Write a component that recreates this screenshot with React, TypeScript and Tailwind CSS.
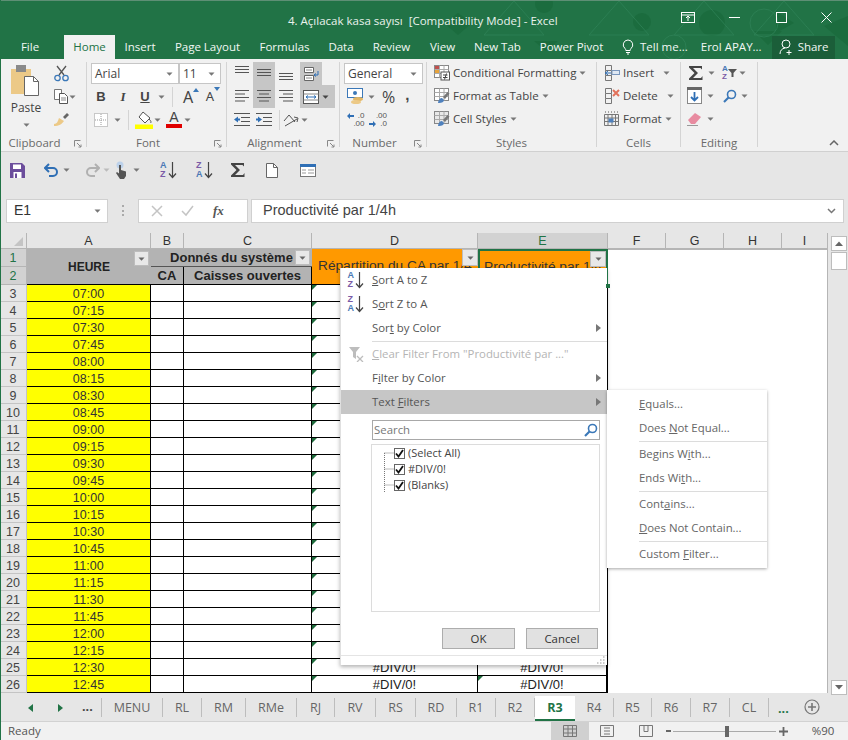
import React from 'react';

const ui = "font-['Open_Sans',sans-serif]";
const arial = "font-['Liberation_Sans',Arial,sans-serif]";

const Caret = ({ c = '#777', cls = '' }: { c?: string; cls?: string }) => (
  <svg width="7" height="4" viewBox="0 0 7 4" className={cls}><path d="M0.5 0.5h6L3.5 3.8z" fill={c} /></svg>
);

const Launcher = () => (
  <svg width="8" height="8" viewBox="0 0 8 8" className="absolute right-[4px] bottom-[-1px]">
    <path d="M.5.5h6M.5.5v6M3 3l4 4M7 4.5V7H4.5" stroke="#888" fill="none" />
  </svg>
);

const Group = ({ w, label, lab = '', children }: { w: string; label: string; lab?: string; children: React.ReactNode }) => (
  <div className={`${w} relative flex flex-col h-[85px] mt-[3px] border-r border-[#d4d4d4] shrink-0`}>
    <div className="flex-1 min-h-0">{children}</div>
    <div className={`h-[16px] mb-[-4px] text-center text-[11.5px] leading-[16px] text-[#6a6a6a] ${lab} ${ui}`}>{label}</div>
  </div>
);

const Combo = ({ w, text }: { w: string; text: string }) => (
  <div className={`${w} h-[21px] bg-white border border-[#c6c6c6] flex items-center justify-between pl-[3px] pr-[5px] text-[12px] text-[#444] ${ui}`}>
    <span>{text}</span><Caret />
  </div>
);

const SortIcon = ({ up = true }: { up?: boolean }) => (
  <span className="relative flex items-center w-[18px] h-[20px] shrink-0">
    <span className={`flex flex-col leading-[9px] text-[9px] font-bold ${arial}`}>
      <span className={up ? 'text-[#4a78b5]' : 'text-[#7a5aa6]'}>{up ? 'A' : 'Z'}</span>
      <span className={up ? 'text-[#7a5aa6]' : 'text-[#4a78b5]'}>{up ? 'Z' : 'A'}</span>
    </span>
    <svg width="9" height="18" viewBox="0 0 9 18" className="ml-[1px]"><path d="M4.5 1v15M1 12.5l3.5 4 3.5-4" stroke="#444" strokeWidth="1.2" fill="none" /></svg>
  </span>
);

const Sigma = ({ s = 18 }: { s?: number }) => (
  <svg width={s} height={s} viewBox="0 0 18 18"><path d="M2 2h13v3.5L13.5 4H6l5 5-5 5h8l1.5-2v4H2v-1.5L7.5 9 2 3.5z" fill="#444" /></svg>
);

const Line = ({ w, y }: { w: number; y: number }) => <rect x={(16 - w) / 2} y={y} width={w} height="1" fill="#555" />;
const Align = ({ kind }: { kind: 'top' | 'mid' | 'bot' | 'l' | 'c' | 'r' }) => {
  if (kind === 'top' || kind === 'mid' || kind === 'bot') {
    const o = kind === 'top' ? 0 : kind === 'mid' ? 3 : 7;
    return <svg width="16" height="16" viewBox="0 0 16 16">{[1, 4, 7].map(y => <Line key={y} w={14} y={y + o} />)}</svg>;
  }
  const ws = [14, 10, 14, 10];
  return (
    <svg width="16" height="16" viewBox="0 0 16 16">
      {ws.map((w, i) => <rect key={i} x={kind === 'l' ? 1 : kind === 'r' ? 15 - w : (16 - w) / 2} y={2 + i * 3.5} width={w} height="1" fill="#555" />)}
    </svg>
  );
};

const Indent = ({ out }: { out?: boolean }) => (
  <svg width="18" height="14" viewBox="0 0 18 14">
    {[1, 5, 9, 13].map((y, i) => <rect key={y} x={i === 0 || i === 3 ? 1 : 8} y={y - 1} width={i === 0 || i === 3 ? 16 : 9} height="1" fill="#555" />)}
    <path d={out ? 'M1 6.5l4-3v2h2v2H5v2z' : 'M7 6.5l-4-3v2H1v2h2v2z'} fill="#2f6fb5" />
  </svg>
);

const Row = ({ cls = '', children }: { cls?: string; children: React.ReactNode }) => (
  <div className={`h-[23px] flex items-center ${cls}`}>{children}</div>
);
const Slot = ({ w = 'w-[22px]', children }: { w?: string; children?: React.ReactNode }) => (
  <div className={`${w} h-[22px] flex items-center justify-center shrink-0`}>{children}</div>
);
const VSep = ({ m }: { m: string }) => <div className={`w-px h-[20px] bg-[#d4d4d4] ${m}`} />;

const StyleIcon = ({ kind }: { kind: 'cf' | 'table' | 'cell' }) => (
  <svg width="16" height="16" viewBox="0 0 16 16">
    <rect x=".5" y=".5" width="14" height="12" fill={kind === 'cell' ? '#e8e8e8' : '#fff'} stroke="#888" />
    <path d="M.5 4.5h14M.5 8.5h14M5.5.5v12M10 .5v12" stroke="#aaa" fill="none" />
    {kind === 'cf' ? (
      <>
        <rect x="1" y="1" width="4" height="3" fill="#c0504d" />
        <rect x="1" y="5" width="4" height="3" fill="#e6a33c" />
        <rect x="7" y="7" width="8.5" height="8" fill="#fff" stroke="#555" />
        <path d="M9 10h4.5M9 12.5h4.5M12.5 8.5l-2 6" stroke="#444" fill="none" />
      </>
    ) : (
      <>
        <path d="M9 9l4.5-5 2 1.5L11 11z" fill="#777" />
        <path d="M4 15c0-3 2-5 4-5l2 2c0 2-3 3.5-6 3z" fill="#4f81bd" />
      </>
    )}
  </svg>
);

const CellIcon = ({ kind }: { kind: 'ins' | 'del' | 'fmt' }) => (
  <svg width="16" height="16" viewBox="0 0 16 16">
    {kind === 'fmt' ? (
      <>
        <path d="M.5 3.5h14v11H.5zM.5 7h14M.5 10.500h14M4 3.500v11M8 3.500v11M11.500 3.500v11" stroke="#777" fill="none" />
        <rect x="4.500" y="7.500" width="5" height="4" fill="#4f81bd" />
        <path d="M1 1h13" stroke="#555" strokeDasharray="1 2" />
      </>
    ) : (
      <>
        <path d="M1.500 .5h6v5h-6zM1.500 10.500h6v5h-6zM1.500 5.500v5M7.500 5.500v5" stroke="#777" fill="none" />
        {kind === 'ins' ? (
          <>
            <rect x="8" y="5.500" width="7.500" height="4" fill="#dfe8f3" stroke="#7a97bd" />
            <path d="M1 8h6M4 6l-2.500 2L4 10" stroke="#2f6fb5" fill="none" />
          </>
        ) : (
          <path d="M9 2l6 6M15 2L9 8" stroke="#e2725b" strokeWidth="2" />
        )}
      </>
    )}
  </svg>
);

const Ribbon = () => (
  <div className="flex h-[93px] shrink-0 bg-[#f1f1f1] border-b border-[#d0d0d0]">
    <Group w="w-[87px]" label="Clipboard" lab="pr-[17px]">
      <div className="flex">
        <div className="w-[50px] flex flex-col items-center pl-[2px]">
          <svg width="30" height="32" viewBox="0 0 30 32" className="mt-[3px]">
            <rect x="0" y="4" width="20" height="25" fill="#ecc987" />
            <rect x="5" y="0" width="10" height="7" fill="#8a8a8a" />
            <path d="M13.500 11.500h9l5 5v14h-14z" fill="#fff" stroke="#666" />
            <path d="M22.500 11.500v5h5" stroke="#666" fill="none" />
          </svg>
          <span className={`text-[12px] leading-[16px] mt-[3px] text-[#444] ${ui}`}>Paste</span>
          <Caret cls="mt-[7px]" />
        </div>
        <div className="flex flex-col">
          <Row>
            <Slot>
              <svg width="15" height="17" viewBox="0 0 15 17"><path d="M3 1l7 9M12 1l-7 9" stroke="#555" strokeWidth="1.300" /><circle cx="3.500" cy="13" r="2.700" fill="none" stroke="#3b78b8" strokeWidth="1.300" /><circle cx="11.500" cy="13" r="2.700" fill="none" stroke="#3b78b8" strokeWidth="1.300" /></svg>
            </Slot>
          </Row>
          <Row>
            <Slot>
              <svg width="15" height="15" viewBox="0 0 15 15"><path d="M.5.500h7v10h-7z" fill="#fff" stroke="#777" /><path d="M5.500 4.500h5l3 3v7h-8z" fill="#fff" stroke="#555" /><path d="M7 9h5M7 11h5" stroke="#888" /></svg>
            </Slot>
            <Caret cls="ml-[-3px]" />
          </Row>
          <Row>
            <Slot>
              <svg width="17" height="15" viewBox="0 0 17 15"><path d="M10 5l4-4 2 2-4 4z" fill="#666" /><path d="M1 12c3 0 4-3 5-6l5 3c-2 3-5 5-10 5z" fill="#ecc987" /></svg>
            </Slot>
          </Row>
        </div>
      </div>
      <Launcher />
    </Group>
    <Group w="w-[140px]" label="Font" lab="pr-[17px]">
      <Row cls="pl-[4px]">
        <Combo w="w-[88px]" text="Arial" />
        <Combo w="w-[42px]" text="11" />
      </Row>
      <Row cls="pl-[3px] text-[13px] text-[#444]">
        <Slot><b className={arial}>B</b></Slot>
        <Slot><i className="font-['Liberation_Serif',serif] font-bold">I</i></Slot>
        <Slot><u className={`${arial} font-bold`}>U</u></Slot>
        <Caret cls="ml-[2px]" />
        <VSep m="ml-[7px] mr-[4px]" />
        <Slot><span className="relative text-[16px] leading-none">A<svg width="6" height="4" viewBox="0 0 6 4" className="absolute right-[-6px] top-[-1px]"><path d="M0 4l3-4 3 4z" fill="#3b78b8" /></svg></span></Slot>
        <Slot><span className="relative text-[13px] leading-none">A<svg width="6" height="4" viewBox="0 0 6 4" className="absolute right-[-6px] top-[-3px]"><path d="M0 0l3 4 3-4z" fill="#3b78b8" /></svg></span></Slot>
      </Row>
      <Row cls="pl-[3px]">
        <Slot>
          <svg width="14" height="14" viewBox="0 0 14 14"><rect x=".5" y=".5" width="13" height="13" fill="#fff" stroke="#999" strokeDasharray="1 1" /><path d="M7 1v12M1 7h12" stroke="#999" strokeDasharray="1 1" /></svg>
        </Slot>
        <Caret cls="ml-[2px]" />
        <VSep m="ml-[7px] mr-[4px]" />
        <Slot>
          <svg width="18" height="18" viewBox="0 0 18 18"><path d="M8 1l7 6-5 5-6-6z" fill="#fff" stroke="#555" /><path d="M14 8c2 2 2.500 3 1.500 4" stroke="#555" fill="none" /><rect x="0" y="13.500" width="18" height="4.500" fill="#ffff00" /></svg>
        </Slot>
        <Caret cls="ml-[-1px]" />
        <Slot w="w-[26px]">
          <span className="relative flex flex-col items-center">
            <span className={`text-[14px] leading-[13px] text-[#444] ${arial}`}>A</span>
            <span className="w-[16px] h-[4px] bg-[#e00000]" />
          </span>
        </Slot>
        <Caret cls="ml-[-3px]" />
      </Row>
      <Launcher />
    </Group>
    <Group w="w-[113px]" label="Alignment" lab="pr-[17px]">
      <div className="flex pl-[4px]">
        <div className="flex flex-col">
          <div className="flex">
            <div className="flex flex-col">
              <Slot><Align kind="top" /></Slot>
              <Slot w="w-[22px] h-[24px]"><Align kind="l" /></Slot>
            </div>
            <div className="flex flex-col">
              <Slot w="w-[22px] bg-[#c6c6c6]"><Align kind="mid" /></Slot>
              <Slot w="w-[22px] bg-[#c6c6c6] h-[24px]"><Align kind="c" /></Slot>
            </div>
            <div className="flex flex-col">
              <Slot><Align kind="bot" /></Slot>
              <Slot w="w-[22px] h-[24px]"><Align kind="r" /></Slot>
            </div>
          </div>
          <div className="flex mt-[1px]">
            <Slot><Indent out /></Slot>
            <Slot><Indent /></Slot>
            <VSep m="ml-[4px] mr-[1px] mt-[1px]" />
            <Slot w="w-[20px]">
              <svg width="18" height="16" viewBox="0 0 18 16"><path d="M2 9l5-6 6 7" stroke="#555" fill="none" /><path d="M3 14l12-7M12 5l4 1-1 4" stroke="#555" fill="none" /></svg>
            </Slot>
            <Caret cls="mt-[9px]" />
          </div>
        </div>
        <div className="flex flex-col ml-[3px] absolute left-[70px] top-0">
          <Slot w="w-[22px] bg-[#c6c6c6] h-[23px]">
            <svg width="16" height="16" viewBox="0 0 16 16"><path d="M1.500 1.500h9v5h-9zM1.500 9.500h9v5h-9z" fill="#fff" stroke="#666" /><path d="M3 4h6M3 12h6" stroke="#888" /><path d="M15 5v4h-4M13 7.500L11 9l2 1.500" stroke="#2f6fb5" fill="none" /></svg>
          </Slot>
          <div className="w-[35px] h-[23px] bg-[#c6c6c6] flex items-center">
            <Slot>
              <svg width="16" height="16" viewBox="0 0 16 16"><rect x=".5" y="1.500" width="15" height="13" fill="#fff" stroke="#555" /><path d="M.5 5h15M.5 11h15" stroke="#888" /><path d="M3 8h10M5 6.500L3 8l2 1.500M11 6.500L13 8l-2 1.500" stroke="#2f6fb5" fill="none" /></svg>
            </Slot>
            <Caret c="#444" />
          </div>
        </div>
      </div>
      <Launcher />
    </Group>
    <Group w="w-[87px]" label="Number" lab="pr-[17px]">
      <Row cls="pl-[4px]"><Combo w="w-[79px]" text="General" /></Row>
      <Row cls="pl-[5px]">
        <Slot>
          <svg width="18" height="17" viewBox="0 0 18 17"><rect x=".5" y=".5" width="15" height="9" fill="#fff" stroke="#3b78b8" /><circle cx="8" cy="5" r="2" fill="#3b78b8" /><ellipse cx="11" cy="11" rx="5" ry="2" fill="#e3b765" /><ellipse cx="9" cy="14" rx="5" ry="2" fill="#ecc987" /></svg>
        </Slot>
        <Caret cls="ml-[1px]" />
        <span className={`ml-[7px] text-[16px] leading-none text-[#444] ${ui}`}>%</span>
        <span className={`ml-[10px] mt-[-5px] text-[15px] font-bold leading-none text-[#444] ${arial}`}>,</span>
      </Row>
      <Row cls="pl-[5px]">
        <Slot w="w-[21px]">
          <span className={`relative w-[18px] h-[16px] text-[8px] leading-[8px] text-[#555] ${arial}`}>
            <span className="absolute right-0 top-0">.0</span><span className="absolute right-0 bottom-0">.00</span>
            <svg width="7" height="6" viewBox="0 0 7 6" className="absolute left-0 top-[1px]"><path d="M0 3l3-3v2h4v2H3v2z" fill="#2f6fb5" /></svg>
          </span>
        </Slot>
        <Slot w="w-[24px]">
          <span className={`relative w-[18px] h-[16px] text-[8px] leading-[8px] text-[#555] ${arial}`}>
            <span className="absolute right-0 top-0">.00</span><span className="absolute right-0 bottom-0">.0</span>
            <svg width="7" height="6" viewBox="0 0 7 6" className="absolute left-0 bottom-[1px]"><path d="M7 3L4 0v2H0v2h4v2z" fill="#2f6fb5" /></svg>
          </span>
        </Slot>
      </Row>
      <Launcher />
    </Group>
    <Group w="w-[170px]" label="Styles">
      <div className="mt-[-1px]">
        {([['cf', 'Conditional Formatting'], ['table', 'Format as Table'], ['cell', 'Cell Styles']] as const).map(([k, t]) => (
          <Row key={k} cls="pl-[7px]">
            <StyleIcon kind={k} />
            <span className={`ml-[3px] text-[11.5px] text-[#444] whitespace-nowrap ${ui}`}>{t}</span>
            <Caret cls="ml-[3px]" />
          </Row>
        ))}
      </div>
    </Group>
    <Group w="w-[84px]" label="Cells">
      <div className="mt-[-1px]">
        {([['ins', 'Insert', 'ml-[9px]'], ['del', 'Delete', 'ml-[9px]'], ['fmt', 'Format', 'ml-[3px]']] as const).map(([k, t, m]) => (
          <Row key={k} cls="pl-[7px]">
            <CellIcon kind={k} />
            <span className={`ml-[3px] text-[11.5px] text-[#444] ${ui}`}>{t}</span>
            <Caret cls={m} />
          </Row>
        ))}
      </div>
    </Group>
    <Group w="w-[77px]" label="Editing">
      <div className="mt-[-1px]">
        <Row cls="pl-[6px]">
          <Slot w="w-[18px]"><Sigma /></Slot>
          <Caret cls="ml-[3px]" />
          <span className="ml-[7px] flex items-center">
            <span className={`flex flex-col text-[8px] leading-[8px] font-bold ${arial}`}><span className="text-[#4a78b5]">A</span><span className="text-[#7a5aa6]">Z</span></span>
            <svg width="9" height="8" viewBox="0 0 9 8"><path d="M0 0h9L5.500 4v4h-2V4z" fill="#555" /></svg>
          </span>
          <Caret cls="ml-[2px]" />
        </Row>
        <Row cls="pl-[6px]">
          <svg width="15" height="17" viewBox="0 0 15 17"><rect x=".5" y=".5" width="14" height="16" fill="#fff" stroke="#888" /><rect x="0" y="0" width="15" height="3" fill="#666" /><path d="M7.500 5v8M4 10l3.500 3.500L11 10" stroke="#2f6fb5" strokeWidth="1.800" fill="none" /></svg>
          <Caret cls="ml-[5px]" />
          <svg width="14" height="14" viewBox="0 0 14 14" className="ml-[9px]"><circle cx="8.500" cy="5.500" r="4" fill="none" stroke="#3b78b8" strokeWidth="1.600" /><path d="M5.500 8.500L1 13" stroke="#3b78b8" strokeWidth="2.200" /></svg>
          <Caret cls="ml-[4px]" />
        </Row>
        <Row cls="pl-[6px]">
          <svg width="15" height="14" viewBox="0 0 15 14"><path d="M1 8l7-7 6 4-6 7H4z" fill="#e88ba0" /><path d="M0 13.500h11" stroke="#999" /></svg>
          <Caret cls="ml-[5px]" />
        </Row>
      </div>
    </Group>
    <div className="flex-1 relative">
      <svg width="10" height="6" viewBox="0 0 10 6" className="absolute right-[9px] bottom-[5px]"><path d="M1 5l4-4 4 4" stroke="#666" strokeWidth="1.500" fill="none" /></svg>
    </div>
  </div>
);

const TitleBar = () => (
  <div className="relative h-[59px] shrink-0 bg-[#217346] border-t border-[#5e8f75] overflow-hidden">
    <svg width="424" height="59" viewBox="0 0 424 59" className="absolute right-0 top-0">
      <g fill="#1a6a3c" opacity=".75">
        <circle cx="218" cy="21" r="9" /><circle cx="288" cy="22" r="13" /><circle cx="120" cy="3" r="9" />
        <path d="M20 22l14-10 14 10-14 12zM330 30l14 14 14-14zM110 40l12 10 12-10z" />
        <path d="M352 10l18 12-18 10zM400 25l24 20v-30z" />
      </g>
      <g fill="none" stroke="#2f8257" opacity=".8">
        <path d="M165 34l30-34 30 34zM250 34l30-34 30 34zM330 34l30-34 30 34zM60 34l30-34 30 34z" />
        <circle cx="340" cy="22" r="14" /><circle cx="250" cy="46" r="12" />
      </g>
    </svg>
    <div className={`relative h-[34px] flex items-center text-[11.5px] text-[#eaf2ed] ${ui}`}>
      <span className="ml-[288px] mt-[5px] whitespace-pre">4. Açılacak kasa sayısı  [Compatibility Mode] - Excel</span>
      <div className="ml-auto flex items-center h-full text-white pb-[2px]">
        <div className="w-[46px] flex justify-center">
          <svg width="14" height="11" viewBox="0 0 14 11"><rect x=".5" y=".5" width="13" height="10" fill="none" stroke="#fff" /><path d="M.5 3h13M7 9V4.500M5 6l2-2 2 2" stroke="#fff" fill="none" /></svg>
        </div>
        <div className="w-[47px] flex justify-center"><span className="w-[11px] h-px bg-white" /></div>
        <div className="w-[46px] flex justify-center"><span className="w-[11px] h-[11px] border border-white" /></div>
        <div className="w-[44px] flex justify-center">
          <svg width="11" height="11" viewBox="0 0 11 11"><path d="M.5.500l10 10M10.500.500l-10 10" stroke="#fff" /></svg>
        </div>
      </div>
    </div>
    <div className={`relative h-[24px] flex items-center text-[11.5px] text-[#f2f7f4] ${ui}`}>
      <span className="w-[60px] text-center">File</span>
      <span className="w-[4px]" />
      <span className="w-[51px] h-full bg-[#f1f1f1] text-[#217346] text-center leading-[24px]">Home</span>
      {[['w-[50px]', 'Insert'], ['w-[85px]', 'Page Layout'], ['w-[69px]', 'Formulas'], ['w-[44px]', 'Data'], ['w-[57px]', 'Review'], ['w-[45px]', 'View'], ['w-[65px]', 'New Tab'], ['w-[83px]', 'Power Pivot']].map(([w, t]) => (
        <span key={t} className={`${w} text-center whitespace-nowrap`}>{t}</span>
      ))}
      <svg width="12" height="16" viewBox="0 0 12 16" className="ml-[9px]"><path d="M6 1a4.800 4.800 0 0 0-3 8.500c.6.600.8 1.200.8 2h4.400c0-.8.2-1.400.8-2A4.800 4.800 0 0 0 6 1zM4 13.500h4M5 15h2" fill="none" stroke="#fff" /></svg>
      <span className="ml-[6px] whitespace-nowrap">Tell me...</span>
      <span className="ml-[13px] whitespace-nowrap">Erol APAY...</span>
      <div className="ml-[10px] w-[63px] h-[23px] bg-[#1b5e39] flex items-center pl-[7px]">
        <svg width="15" height="16" viewBox="0 0 15 16"><circle cx="7" cy="5" r="4" fill="none" stroke="#fff" /><path d="M1 15c0-3.500 2-5.500 5-6M10 11v5M7.500 13.500h5" fill="none" stroke="#fff" /></svg>
        <span className="ml-[4px]">Share</span>
      </div>
    </div>
  </div>
);

const Qat = () => (
  <div className="h-[38px] shrink-0 bg-[#e6e6e6] flex items-center pl-[10px] pb-[2px]">
    <svg width="15" height="15" viewBox="0 0 15 15"><path d="M0 0h12l3 3v12H0z" fill="#6c4e9c" /><rect x="3" y="1.500" width="8" height="4.500" fill="#fff" /><rect x="3.500" y="9" width="8" height="6" fill="#fff" /><rect x="5" y="10.500" width="2" height="4.500" fill="#6c4e9c" /></svg>
    <svg width="16" height="14" viewBox="0 0 16 14" className="ml-[19px]"><path d="M5 1L1 5l4 4M1 5h8a4 4 0 0 1 0 8H5" stroke="#2f6fb5" strokeWidth="2" fill="none" /></svg>
    <Caret cls="ml-[3px]" />
    <svg width="16" height="14" viewBox="0 0 16 14" className="ml-[14px]"><path d="M11 1l4 4-4 4M15 5H7a4 4 0 0 0 0 8h4" stroke="#b0b0b0" strokeWidth="2" fill="none" /></svg>
    <Caret c="#bbb" cls="ml-[3px]" />
    <svg width="14" height="18" viewBox="0 0 14 18" className="ml-[4px]"><circle cx="6" cy="4" r="3.500" fill="#bcd1ea" /><path d="M5 4h2v5l5 1.500V15l-2 3H6L2 12l1-1 2 1.500z" fill="#555" /></svg>
    <Caret cls="ml-[5px]" />
    <span className="ml-[20px]"><SortIcon /></span>
    <span className="ml-[18px]"><SortIcon up={false} /></span>
    <span className="ml-[15px]"><Sigma /></span>
    <svg width="12" height="15" viewBox="0 0 12 15" className="ml-[19px]"><path d="M.5.500h7l4 4v10H.5z" fill="#fff" stroke="#666" /><path d="M7.500.500v4h4" fill="none" stroke="#666" /></svg>
    <svg width="16" height="13" viewBox="0 0 16 13" className="ml-[22px]"><rect x=".5" y=".5" width="15" height="12" fill="#fff" stroke="#777" /><rect x="0" y="0" width="16" height="3" fill="#2f6fb5" /><path d="M2 6h4M2 9h4M8 6h6M8 9h6" stroke="#999" /></svg>
  </div>
);

const FormulaBar = () => (
  <div className="h-[43px] shrink-0 bg-[#e6e6e6] flex items-center pl-[6px] pb-[2px]">
    <div className={`w-[102px] h-[24px] bg-white border border-[#d0d0d0] flex items-center justify-between pl-[7px] pr-[6px] text-[14px] text-[#333] ${arial}`}>
      <span>E1</span><Caret />
    </div>
    <div className="ml-[14px] w-[2px] h-[11px] border-l-2 border-dotted border-[#aaa]" />
    <div className="ml-[14px] w-[110px] h-[24px] bg-white border border-[#d0d0d0] flex items-center text-[#bbb]">
      <svg width="12" height="12" viewBox="0 0 12 12" className="ml-[12px]"><path d="M1 1l10 10M11 1L1 11" stroke="#c4c4c4" strokeWidth="1.500" /></svg>
      <svg width="13" height="12" viewBox="0 0 13 12" className="ml-[18px]"><path d="M1 6l4 4 7-9" stroke="#c4c4c4" strokeWidth="1.500" fill="none" /></svg>
      <i className="ml-[19px] font-['Liberation_Serif',serif] font-bold text-[13px] text-[#555]">fx</i>
    </div>
    <div className={`ml-[3px] w-[593px] h-[24px] bg-white border border-[#d0d0d0] flex items-center justify-between pl-[11px] pr-[7px] text-[14.5px] text-[#444] ${arial}`}>
      <span>Productivité par 1/4h</span>
      <svg width="9" height="6" viewBox="0 0 9 6"><path d="M1 1l3.500 3.500L8 1" stroke="#777" strokeWidth="1.500" fill="none" /></svg>
    </div>
  </div>
);

const FilterBtn = ({ cls = '' }: { cls?: string }) => (
  <div className={`absolute w-[15px] h-[15px] bg-[#e8e8e8] border border-[#bdbdbd] flex items-center justify-center ${cls}`}>
    <Caret c="#666" />
  </div>
);

const times = Array.from({ length: 24 }, (_, i) => {
  const m = 7 * 60 + i * 15;
  return `${String(Math.floor(m / 60)).padStart(2, '0')}:${String(m % 60).padStart(2, '0')}`;
});

const Tri = () => <span className="absolute left-0 top-0 w-0 h-0 border-t-[5px] border-r-[5px] border-t-[#1e6b3c] border-r-transparent" />;

const Sheet = () => (
  <div className="flex-1 flex min-h-0 bg-[#e6e6e6]">
    <div className={`grid grid-cols-[27px_124px_33px_128px_166px_130px_58px_58px_58px_46px] grid-rows-[16px_18px_18px_repeat(24,17px)] w-[828px] ${arial} text-[12px]`}>
      <div className="border-r border-b border-[#b5b5b5] relative">
        <svg width="9" height="9" viewBox="0 0 9 9" className="absolute right-[3px] bottom-[2px]"><path d="M9 0v9H0z" fill="#c4c4c4" /></svg>
      </div>
      {['A', 'B', 'C', 'D', 'E', 'F', 'G', 'H', 'I'].map(c => (
        <div key={c} className={`text-center leading-[17px] border-r border-b border-[#b5b5b5] text-[12.5px] ${c === 'E' ? 'bg-[#d2d2d2] text-[#217346]' : 'text-[#333]'}`}>{c}</div>
      ))}
      <div className="col-start-1 row-start-2 bg-[#d2d2d2] text-[#217346] text-center leading-[19px] border-r border-b border-[#b5b5b5] text-[12.5px]">1</div>
      <div className="col-start-1 row-start-3 bg-[#d2d2d2] text-[#217346] text-center leading-[19px] border-r border-b border-[#b5b5b5] text-[12.5px]">2</div>
      <div className="col-start-2 row-start-2 row-span-2 relative bg-[#b3b3b3] flex items-center justify-center font-bold text-[#222] border-b border-black">
        HEURE<FilterBtn cls="right-[2px] top-[2px]" />
      </div>
      <div className="col-start-3 col-span-2 row-start-2 relative bg-[#b3b3b3] flex items-center justify-center font-bold text-[13px] text-[#222] border-b border-[#555]">
        Donnés du système<FilterBtn cls="right-[2px] top-[1px]" />
      </div>
      <div className="col-start-3 row-start-3 bg-[#b3b3b3] flex items-center justify-center font-bold text-[13px] text-[#222] border-r border-b border-black">CA</div>
      <div className="col-start-4 row-start-3 bg-[#b3b3b3] flex items-center justify-center font-bold text-[13px] text-[#222] border-r border-b border-black">Caisses ouvertes</div>
      <div className="col-start-5 row-start-2 row-span-2 relative bg-[#ff9900] flex items-center pl-[6px] text-[13.7px] text-[#333] overflow-hidden whitespace-nowrap border-b border-black">
        Répartition du CA par 1/4
        <FilterBtn cls="right-0 top-0 w-[16px] h-[17px]" />
      </div>
      <div className="col-start-6 row-start-2 row-span-2 relative bg-[#ff9900] flex items-center pl-[4px] text-[13.7px] text-[#333] overflow-hidden whitespace-nowrap border-2 border-[#217346]">
        Productivité par 1/4
        <FilterBtn cls="right-0 top-0 w-[16px] h-[16px]" />
      </div>
      <div className="col-start-7 col-span-4 row-start-2 row-span-26 bg-white border-t border-r border-[#b5b5b5]" />
      {times.map((t, i) => (
        <React.Fragment key={t}>
          <div className="col-start-1 bg-[#e6e6e6] text-center text-[12.5px] leading-[18px] text-[#444] border-r border-b border-[#c4c4c4]">{i + 3}</div>
          <div className="col-start-2 bg-[#ffff00] text-center text-[#333] text-[12.5px] leading-[18px] border-b border-r border-black">{t}</div>
          <div className="col-start-3 bg-white border-b border-r border-black" />
          <div className="col-start-4 bg-white border-b border-r border-black" />
          <div className="col-start-5 relative bg-white text-center text-[13px] leading-[18px] text-[#222] border-b border-r border-black"><Tri />{i >= 22 ? '#DIV/0!' : ''}</div>
          <div className="col-start-6 relative bg-white text-center text-[13px] leading-[18px] text-[#222] border-b border-r-2 border-black"><Tri />{i >= 22 ? '#DIV/0!' : ''}</div>
        </React.Fragment>
      ))}
    </div>
    <div className="flex-1 flex flex-col items-center pt-[3px] pl-[3px] pr-[1px]">
      <div className="w-[16px] h-[15px] bg-white border border-[#bdbdbd] flex items-center justify-center">
        <svg width="8" height="5" viewBox="0 0 8 5"><path d="M0 5l4-4.500L8 5z" fill="#666" /></svg>
      </div>
      <div className="w-[16px] h-[18px] bg-white border border-[#bdbdbd] mt-[1px]" />
      <div className="w-[16px] h-[15px] bg-white border border-[#bdbdbd] mt-auto mb-[1px] flex items-center justify-center">
        <svg width="8" height="5" viewBox="0 0 8 5"><path d="M0 0l4 4.500L8 0z" fill="#666" /></svg>
      </div>
    </div>
  </div>
);

const MenuItem = ({ icon, children, arrow, dim, hi }: { icon?: React.ReactNode; children: React.ReactNode; arrow?: boolean; dim?: boolean; hi?: boolean }) => (
  <div className={`h-[24px] flex items-center shrink-0 ${hi ? 'bg-[#c6c6c6]' : ''}`}>
    <div className="w-[31px] flex justify-center">{icon}</div>
    <span className={`text-[11.4px] whitespace-nowrap ${dim ? 'text-[#b4b4b4]' : 'text-[#555]'}`}>{children}</span>
    {arrow && <svg width="5" height="8" viewBox="0 0 5 8" className="ml-auto mr-[6px]"><path d="M0 0l5 4-5 4z" fill="#777" /></svg>}
  </div>
);
const Sep = ({ cls = 'ml-[31px]' }: { cls?: string }) => <div className={`h-[2px] shrink-0 border-b border-[#dcdcdc] ${cls}`} />;

const Popup = () => (
  <div className={`absolute left-[340px] top-[268px] w-[267px] h-[397px] bg-white shadow-[0_2px_4px_rgba(0,0,0,0.3)] border-l border-[#e0e0e0] flex flex-col z-10 ${ui}`}>
    <MenuItem icon={<SortIcon />}><u>S</u>ort A to Z</MenuItem>
    <MenuItem icon={<SortIcon up={false} />}>S<u>o</u>rt Z to A</MenuItem>
    <MenuItem arrow>Sor<u>t</u> by Color</MenuItem>
    <Sep />
    <MenuItem dim icon={
      <svg width="16" height="15" viewBox="0 0 16 15"><path d="M0 0h11L7 5v7l-3-2V5z" fill="#bdbdbd" /><path d="M8 9l6 6M14 9l-6 6" stroke="#bdbdbd" strokeWidth="1.300" /></svg>
    }><u>C</u>lear Filter From "Productivité par ..."</MenuItem>
    <MenuItem arrow>F<u>i</u>lter by Color</MenuItem>
    <MenuItem arrow hi>Text <u>F</u>ilters</MenuItem>
    <div className="ml-[31px] mr-[7px] mt-[6px] h-[20px] border border-[#a8a8a8] flex items-center justify-between pl-[1px] pr-[1px] text-[11.4px] text-[#777] shrink-0">
      <span>Search</span>
      <svg width="14" height="14" viewBox="0 0 14 14"><circle cx="8.500" cy="5.500" r="4" fill="none" stroke="#3b78b8" strokeWidth="1.600" /><path d="M5.500 8.500L1 13" stroke="#3b78b8" strokeWidth="2.200" /></svg>
    </div>
    <div className="relative ml-[30px] mr-[7px] mt-[4px] h-[168px] border border-[#dcdcdc] shrink-0">
      <svg width="11" height="41" viewBox="0 0 11 41" className="absolute left-[12px] top-[7px]"><path d="M.5 1v40M.5 1h10M.5 17h10M.5 33h10" stroke="#777" strokeDasharray="1 1" fill="none" /></svg>
      {['(Select All)', '#DIV/0!', '(Blanks)'].map(t => (
        <div key={t} className="h-[16px] flex items-center pl-[22px] text-[11px] text-[#444]">
          <span className="w-[11px] h-[11px] border border-[#666] bg-white flex items-center justify-center shrink-0">
            <svg width="9" height="9" viewBox="0 0 9 9"><path d="M1 4.500l2.500 3L8 1" stroke="#111" strokeWidth="1.800" fill="none" /></svg>
          </span>
          <span className="ml-[3px]">{t}</span>
        </div>
      ))}
    </div>
    <div className="flex ml-[101px] mt-[16px] gap-[11px] text-[11.4px] text-[#333] shrink-0">
      <div className="w-[73px] h-[21px] bg-[#e1e1e1] border border-[#adadad] flex items-center justify-center">OK</div>
      <div className="w-[72px] h-[21px] bg-[#e1e1e1] border border-[#adadad] flex items-center justify-center">Cancel</div>
    </div>
    <div className="mt-[6px] border-t border-[#e4e4e4] flex-1 relative">
      <svg width="8" height="8" viewBox="0 0 8 8" className="absolute right-[2px] bottom-[1px]"><path d="M6 1h1.500M3 4h1.500M6 4h1.500M0 7h1.500M3 7h1.500M6 7h1.500" stroke="#999" /></svg>
    </div>
  </div>
);

const SubMenu = () => (
  <div className={`absolute left-[607px] top-[390px] w-[160px] h-[178px] bg-white shadow-[0_1px_3px_rgba(0,0,0,0.35)] flex flex-col pt-[2px] z-20 text-[11.4px] text-[#666] ${ui}`}>
    <div className="h-[24px] leading-[24px] pl-[32px]"><u>E</u>quals...</div>
    <div className="h-[24px] leading-[24px] pl-[32px]">Does <u>N</u>ot Equal...</div>
    <Sep cls="ml-[32px]" />
    <div className="h-[24px] leading-[24px] pl-[32px]">Begins W<u>i</u>th...</div>
    <div className="h-[24px] leading-[24px] pl-[32px]">Ends Wi<u>t</u>h...</div>
    <Sep cls="ml-[32px]" />
    <div className="h-[24px] leading-[24px] pl-[32px]">Cont<u>a</u>ins...</div>
    <div className="h-[24px] leading-[24px] pl-[32px]"><u>D</u>oes Not Contain...</div>
    <Sep cls="ml-[32px]" />
    <div className="h-[24px] leading-[24px] pl-[32px]">Custom <u>F</u>ilter...</div>
  </div>
);

const tabs: [string, string][] = [['MENU', 'w-[61px]'], ['RL', 'w-[39px]'], ['RM', 'w-[44px]'], ['RMe', 'w-[51px]'], ['RJ', 'w-[38px]'], ['RV', 'w-[41px]'], ['RS', 'w-[40px]'], ['RD', 'w-[41px]'], ['R1', 'w-[39px]'], ['R2', 'w-[39px]'], ['R3', 'w-[40px]'], ['R4', 'w-[39px]'], ['R5', 'w-[38px]'], ['R6', 'w-[39px]'], ['R7', 'w-[39px]'], ['CL', 'w-[39px]']];

const TabBar = () => (
  <div className={`h-[26px] shrink-0 bg-[#e6e6e6] flex items-start border-b border-[#d2d2d2] text-[12.5px] text-[#666] ${ui}`}>
    <div className="w-[102px] h-[19px] mt-[2px] flex items-center border-r border-[#bdbdbd] shrink-0">
      <svg width="5" height="8" viewBox="0 0 5 8" className="ml-[28px]"><path d="M5 0L0 4l5 4z" fill="#217346" /></svg>
      <svg width="5" height="8" viewBox="0 0 5 8" className="ml-[25px]"><path d="M0 0l5 4-5 4z" fill="#217346" /></svg>
      <span className="ml-[19px] font-bold text-[#444] leading-none">...</span>
    </div>
    {tabs.map(([t, w]) =>
      t === 'R3' ? (
        <div key={t} className={`${w} h-[25px] bg-white border-b-2 border-[#217346] text-center font-bold text-[#217346] leading-[24px] shrink-0`}>{t}</div>
      ) : (
        <div key={t} className={`${w} h-[19px] mt-[2px] text-center leading-[19px] border-r border-[#bdbdbd] shrink-0`}>{t}</div>
      )
    )}
    <span className="ml-[9px] mt-[3px] font-bold text-[#217346] leading-[19px]">...</span>
    <svg width="16" height="16" viewBox="0 0 16 16" className="ml-[15px] mt-[3px]"><circle cx="8" cy="8" r="7" fill="none" stroke="#777" strokeWidth="1.200" /><path d="M8 4v8M4 8h8" stroke="#777" strokeWidth="1.600" /></svg>
  </div>
);

const StatusBar = () => (
  <div className={`h-[18px] shrink-0 bg-[#f1f1f1] flex items-center text-[11.5px] text-[#555] ${ui}`}>
    <span className="ml-[8px]">Ready</span>
    <div className="ml-[510px] w-[38px] h-[18px] bg-[#d0d0d0] flex items-center justify-center">
      <svg width="14" height="12" viewBox="0 0 14 12"><path d="M.5.500h13v11H.5zM.5 4h13M.5 8h13M5 .500v11M9.500 .500v11" stroke="#777" fill="none" /></svg>
    </div>
    <svg width="14" height="12" viewBox="0 0 14 12" className="ml-[11px]"><path d="M.5.500h13v11H.5z" stroke="#777" fill="none" /><path d="M4 3h6M4 6h6M4 9h6" stroke="#777" /></svg>
    <svg width="14" height="12" viewBox="0 0 14 12" className="ml-[25px]"><path d="M.5.500h13v11H.5zM5 .500v6h4v-6" stroke="#777" fill="none" /></svg>
    <span className="ml-[13px] w-[5px] h-[2px] bg-[#666]" />
    <div className="relative ml-[2px] w-[103px] h-[1px] bg-[#aaa] mx-[3px]">
      <span className="absolute left-[52px] top-[-5px] w-[4px] h-[11px] bg-[#666]" />
    </div>
    <svg width="9" height="9" viewBox="0 0 9 9"><path d="M4.500 0v9M0 4.500h9" stroke="#666" strokeWidth="1.800" /></svg>
    <span className="ml-[24px]">%90</span>
  </div>
);

export default function App() {
  return (
    <div className="relative w-[848px] h-[740px] overflow-hidden flex flex-col bg-[#e6e6e6]">
      <TitleBar />
      <Ribbon />
      <Qat />
      <FormulaBar />
      <Sheet />
      <TabBar />
      <StatusBar />
      <Popup />
      <SubMenu />
      <div className="absolute left-[607px] top-[268px] w-px h-[18px] bg-[#217346] z-30" />
      <div className="absolute left-[606px] top-[284px] w-[4px] h-[4px] bg-[#217346] z-30" />
      <div className="absolute left-0 top-0 w-px h-full bg-[#217346] z-30" />
    </div>
  );
}
